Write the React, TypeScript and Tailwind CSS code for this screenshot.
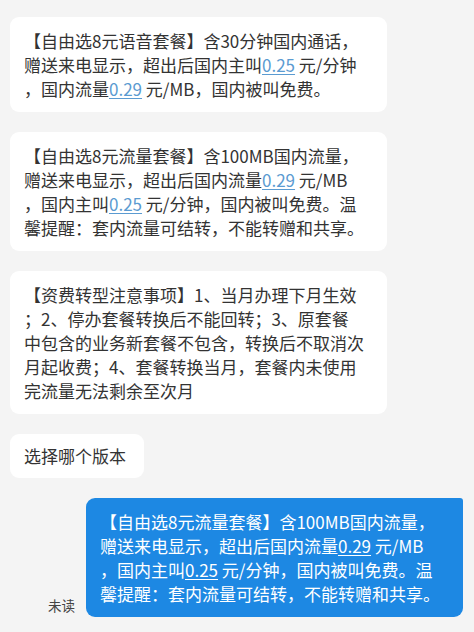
import type { ReactNode } from 'react';

const font = { fontFamily: '"Noto Sans CJK SC", "Noto Sans", sans-serif' };

function Num({ children, light }: { children: ReactNode; light?: boolean }) {
  return (
    <span className={light ? 'underline underline-offset-2' : 'text-[#5b9bd1] underline underline-offset-2'}>
      {children}
    </span>
  );
}

function Lines({ lines }: { lines: ReactNode[] }) {
  return (
    <>
      {lines.map((l, i) => (
        <span key={i} className="block whitespace-nowrap">
          {l}
        </span>
      ))}
    </>
  );
}

function Incoming({ children, fit }: { children: ReactNode; fit?: boolean }) {
  return (
    <div
      className={`${fit ? 'w-fit pr-[18px] py-[10px]' : 'w-[377px] pr-[10px] py-[11.5px]'} rounded-[9px] bg-white pl-[14px] text-[17px] leading-[24px] text-[#333333]`}
    >
      {children}
    </div>
  );
}

export default function App() {
  return (
    <div className="min-h-screen bg-[#f4f4f4] px-[10px] pt-[17px] pb-[14px]" style={font}>
      <div className="flex flex-col gap-[20px]">
        <Incoming>
          <Lines
            lines={[
              '【自由选8元语音套餐】含30分钟国内通话，',
              <>赠送来电显示，超出后国内主叫<Num>0.25</Num> 元/分钟</>,
              <>，国内流量<Num>0.29</Num> 元/MB，国内被叫免费。</>,
            ]}
          />
        </Incoming>

        <Incoming>
          <Lines
            lines={[
              '【自由选8元流量套餐】含100MB国内流量，',
              <>赠送来电显示，超出后国内流量<Num>0.29</Num> 元/MB</>,
              <>，国内主叫<Num>0.25</Num> 元/分钟，国内被叫免费。温</>,
              '馨提醒：套内流量可结转，不能转赠和共享。',
            ]}
          />
        </Incoming>

        <Incoming>
          <Lines
            lines={[
              '【资费转型注意事项】1、当月办理下月生效',
              '；2、停办套餐转换后不能回转；3、原套餐',
              '中包含的业务新套餐不包含，转换后不取消次',
              '月起收费；4、套餐转换当月，套餐内未使用',
              '完流量无法剩余至次月',
            ]}
          />
        </Incoming>

        <Incoming fit>
          <span className="block">选择哪个版本</span>
        </Incoming>

        <div className="flex items-end justify-end gap-[11px] pr-[1px]">
          <span className="mb-[2px] text-[13.5px] leading-[20px] text-[#444444]">未读</span>
          <div className="w-[377px] rounded-[9px] rounded-tr-[3px] bg-[#1d88e3] pl-[14px] pr-[10px] py-[11.5px] text-[17px] leading-[24px] text-white">
            <Lines
              lines={[
                '【自由选8元流量套餐】含100MB国内流量，',
                <>赠送来电显示，超出后国内流量<Num light>0.29</Num> 元/MB</>,
                <>，国内主叫<Num light>0.25</Num> 元/分钟，国内被叫免费。温</>,
                '馨提醒：套内流量可结转，不能转赠和共享。',
              ]}
            />
          </div>
        </div>
      </div>
    </div>
  );
}
